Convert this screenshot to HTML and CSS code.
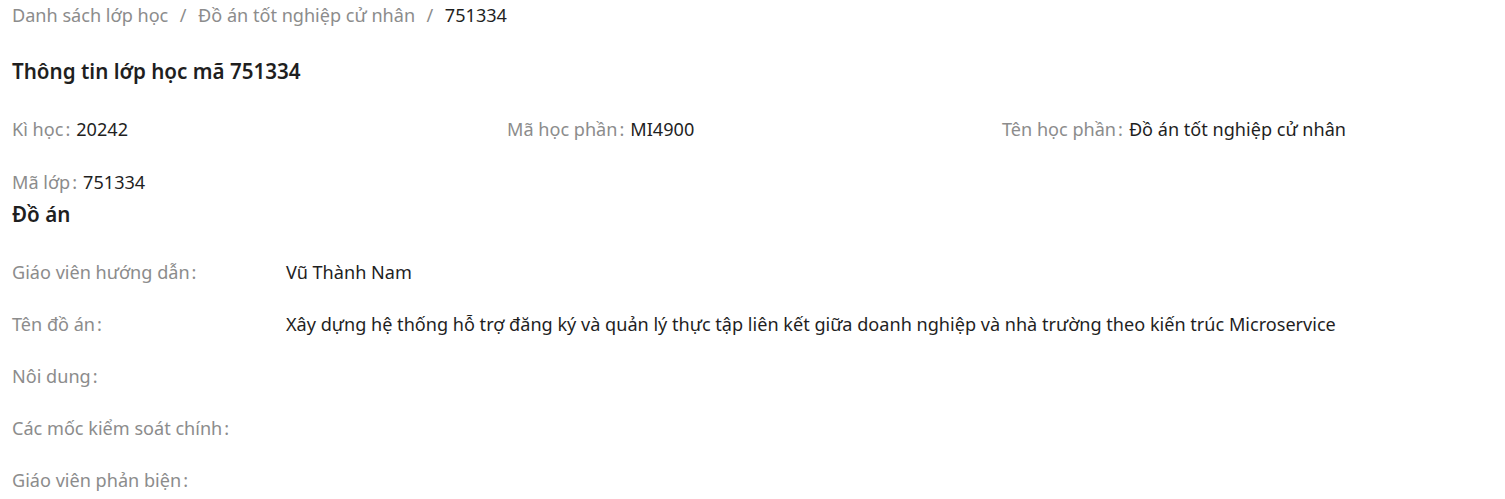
FILE: index.html
```html
<!DOCTYPE html>
<html lang="vi">
<head>
<meta charset="utf-8">
<title>Thông tin lớp học</title>
<link rel="stylesheet" href="styles.css">
</head>
<body>
<div class="page">
  <nav class="breadcrumb">
    <span class="crumb link">Danh sách lớp học</span>
    <span class="sep">/</span>
    <span class="crumb link">Đồ án tốt nghiệp cử nhân</span>
    <span class="sep">/</span>
    <span class="crumb current">751334</span>
  </nav>

  <h2 class="title">Thông tin lớp học mã 751334</h2>

  <div class="desc-grid">
    <div class="item"><span class="label">Kì học</span><span class="value">20242</span></div>
    <div class="item"><span class="label">Mã học phần</span><span class="value">MI4900</span></div>
    <div class="item"><span class="label">Tên học phần</span><span class="value">Đồ án tốt nghiệp cử nhân</span></div>
    <div class="item last"><span class="label">Mã lớp</span><span class="value">751334</span></div>
  </div>

  <h3 class="subtitle">Đồ án</h3>

  <div class="desc-list">
    <div class="row"><span class="label wide">Giáo viên hướng dẫn</span><span class="value">Vũ Thành Nam</span></div>
    <div class="row"><span class="label wide">Tên đồ án</span><span class="value">Xây dựng hệ thống hỗ trợ đăng ký và quản lý thực tập liên kết giữa doanh nghiệp và nhà trường theo kiến trúc Microservice</span></div>
    <div class="row"><span class="label wide">Nôi dung</span><span class="value"></span></div>
    <div class="row"><span class="label wide">Các mốc kiểm soát chính</span><span class="value"></span></div>
    <div class="row"><span class="label wide">Giáo viên phản biện</span><span class="value"></span></div>
  </div>
</div>
</body>
</html>
```

FILE: styles.css
```css
html, body {
  margin: 0;
  padding: 0;
  background: #ffffff;
}

body {
  font-family: "Noto Sans", "Open Sans", sans-serif;
  font-size: 18.1px;
  color: #1f1f1f;
}

.page {
  padding: 0 12px;
}

.breadcrumb {
  display: flex;
  align-items: center;
  height: 30px;
  line-height: 30px;
}

.crumb.link {
  color: #8c8c8c;
}

.crumb.current {
  color: #1f1f1f;
}

.sep {
  color: #8c8c8c;
  margin: 0 11.5px;
}

.title {
  margin: 26px 0 0;
  font-size: 20.6px;
  font-weight: 600;
  line-height: 30px;
  color: #1f1f1f;
}

.desc-grid {
  display: grid;
  grid-template-columns: repeat(3, 495px);
  margin-top: 30px;
}

.item {
  display: flex;
  line-height: 27px;
  padding-bottom: 26px;
}

.item.last {
  padding-bottom: 0;
}

.label {
  color: #8c8c8c;
  white-space: nowrap;
}

.label::after {
  content: ":";
  margin: 0 6px 0 2px;
}

.value {
  color: #1f1f1f;
}

.subtitle {
  margin: 3px 0 0;
  font-size: 20.6px;
  font-weight: 600;
  line-height: 30px;
  color: #1f1f1f;
}

.desc-list {
  display: flex;
  flex-direction: column;
  gap: 25px;
  margin-top: 30px;
}

.row {
  display: flex;
  line-height: 27px;
}

.label.wide {
  width: 274px;
  flex: none;
}
```
